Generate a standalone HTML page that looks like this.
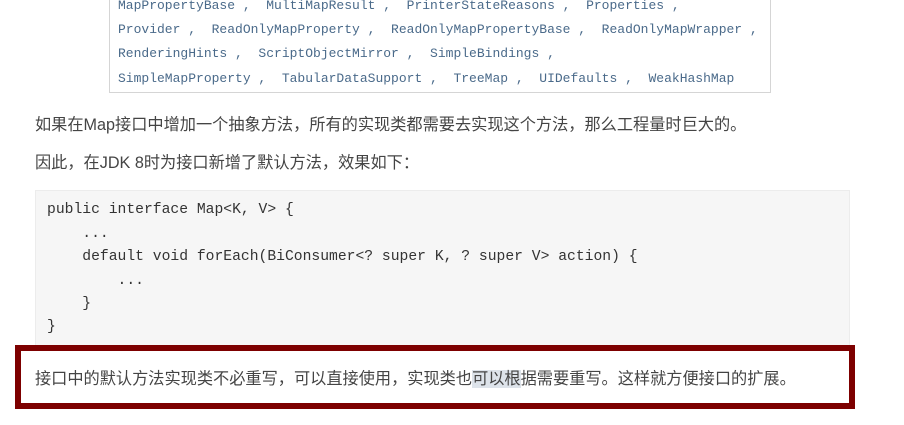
<!DOCTYPE html>
<html><head><meta charset="utf-8"><style>
body{margin:0;width:904px;height:425px;background:#fff;position:relative;overflow:hidden;font-family:"Liberation Sans","Noto Sans CJK SC",sans-serif;}
.top{position:absolute;left:109px;top:-20px;width:660px;height:112px;border:1px solid #d5d5d5;border-top:none;}
.tl{position:absolute;left:118px;font-family:"Liberation Mono",monospace;font-size:13px;color:#4a6a8a;white-space:pre;}
.p{position:absolute;left:35px;font-size:16.2px;color:#444;}
.code{position:absolute;left:35px;top:190px;width:815px;height:160px;background:#f6f6f6;border:1px solid #ececec;box-sizing:border-box;}
.cl{position:absolute;left:47px;font-family:"Liberation Mono",monospace;font-size:14.7px;color:#333;white-space:pre;}
.red{position:absolute;left:15px;top:345px;width:840px;height:64px;border:6px solid #7d0000;box-sizing:border-box;background:#fff;}
.rt{position:absolute;left:35px;top:365px;font-size:16.2px;color:#444;}
.hl{background:#dde3ea;}
</style></head><body>
<div class="top"></div>
<div class="tl" style="top:-2px">MapPropertyBase ,  MultiMapResult ,  PrinterStateReasons ,  Properties ,</div>
<div class="tl" style="top:22px">Provider ,  ReadOnlyMapProperty ,  ReadOnlyMapPropertyBase ,  ReadOnlyMapWrapper ,</div>
<div class="tl" style="top:46px">RenderingHints ,  ScriptObjectMirror ,  SimpleBindings ,</div>
<div class="tl" style="top:71px">SimpleMapProperty ,  TabularDataSupport ,  TreeMap ,  UIDefaults ,  WeakHashMap</div>
<div class="p" style="top:111px">如果在Map接口中增加一个抽象方法，所有的实现类都需要去实现这个方法，那么工程量时巨大的。</div>
<div class="p" style="top:149px">因此，在JDK 8时为接口新增了默认方法，效果如下：</div>
<div class="code"></div>
<div class="cl" style="top:202px">public interface Map&lt;K, V&gt; {</div>
<div class="cl" style="top:226px">    ...</div>
<div class="cl" style="top:249px">    default void forEach(BiConsumer&lt;? super K, ? super V&gt; action) {</div>
<div class="cl" style="top:273px">        ...</div>
<div class="cl" style="top:296px">    }</div>
<div class="cl" style="top:319px">}</div>
<div class="red"></div>
<div class="rt">接口中的默认方法实现类不必重写，可以直接使用，实现类也<span class="hl">可以根</span>据需要重写。这样就方便接口的扩展。</div>
</body></html>
